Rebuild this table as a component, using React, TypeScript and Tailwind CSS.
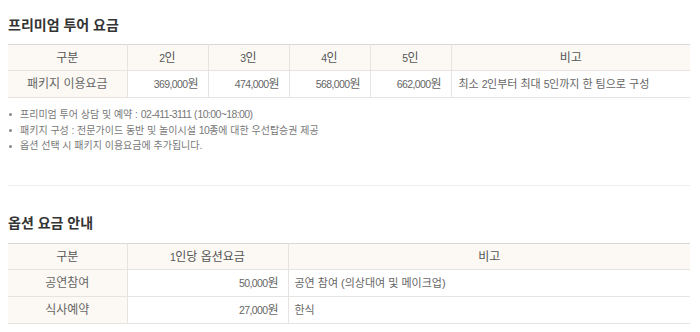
const tourHeads = ["구분", "2인", "3인", "4인", "5인", "비고"];
const tourWidths = ["w-[119px]", "w-[81px]", "w-[81px]", "w-[81px]", "w-[81px]", ""];
const tourPrices = ["369,000원", "474,000원", "568,000원", "662,000원"];

const notes = [
  "프리미엄 투어 상담 및 예약 : 02-411-3111 (10:00~18:00)",
  "패키지 구성 : 전문가이드 동반 및 놀이시설 10종에 대한 우선탑승권 제공",
  "옵션 선택 시 패키지 이용요금에 추가됩니다.",
];

const options = [
  { name: "공연참여", price: "50,000원", note: "공연 참여 (의상대여 및 메이크업)" },
  { name: "식사예약", price: "27,000원", note: "한식" },
];

const th = "h-[26px] border-b border-l border-[#e6e3e1] bg-[#fcf9f4] text-center font-normal text-[#555] first:border-l-0";
const td = "h-[27px] border-b border-l border-[#e6e3e1] first:border-l-0";

// digits in the source are set much narrower than the hangul around them
function Txt({ text }: { text: string }) {
  const parts = text.split(/([0-9][0-9,:~\-()]*)/);
  return (
    <>
      {parts.map((p, i) =>
        i % 2 === 1 ? (
          <span key={i} className="text-[10.5px] tracking-[-0.6px]">
            {p}
          </span>
        ) : (
          <span key={i}>{p}</span>
        )
      )}
    </>
  );
}

export default function App() {
  return (
    <div
      className="w-[700px] bg-white pl-2 pr-[10px] pt-[17px] text-[12px] text-[#666]"
      style={{ fontFamily: '"Liberation Sans", "Noto Sans CJK KR", sans-serif' }}
    >
      <h3 className="text-[14px] leading-[16px] font-bold text-[#333]">프리미엄 투어 요금</h3>
      <table className="mt-[11px] w-[682px] table-fixed border-collapse border-t border-[#dcd8d8]">
        <thead>
          <tr>
            {tourHeads.map((h, i) => (
              <th key={h} className={`${th} ${tourWidths[i]}`}>
                <Txt text={h} />
              </th>
            ))}
          </tr>
        </thead>
        <tbody>
          <tr>
            <td className={`${td} bg-[#fcf9f4] text-center`}>패키지 이용요금</td>
            {tourPrices.map((p) => (
              <td key={p} className={`${td} pr-[9px] text-right`}>
                <Txt text={p} />
              </td>
            ))}
            <td className={`${td} pl-[7px] text-[11px]`}>
              <Txt text="최소 2인부터 최대 5인까지 한 팀으로 구성" />
            </td>
          </tr>
        </tbody>
      </table>

      <ul className="mt-2 text-[10px] leading-[16px] text-[#777]">
        {notes.map((n) => (
          <li key={n} className="flex h-[16px] items-center overflow-hidden">
            <span className="ml-[1px] mr-[8px] h-[3px] w-[3px] shrink-0 rounded-full bg-[#888]" />
            <span className="leading-[16px]">
              <Txt text={n} />
            </span>
          </li>
        ))}
      </ul>

      <div className="mt-[31px] border-t border-[#eeeeee]" />

      <h3 className="mt-[29px] text-[14px] leading-[16px] font-bold text-[#333]">옵션 요금 안내</h3>
      <table className="mt-[12px] w-[682px] table-fixed border-collapse border-t border-[#dcd8d8]">
        <thead>
          <tr>
            <th className={`${th} w-[119px]`}>구분</th>
            <th className={`${th} w-[161px]`}>
              <Txt text="1인당 옵션요금" />
            </th>
            <th className={th}>비고</th>
          </tr>
        </thead>
        <tbody>
          {options.map((o) => (
            <tr key={o.name}>
              <td className={`${td} bg-[#fcf9f4] text-center`}>{o.name}</td>
              <td className={`${td} pr-[9px] text-right`}>
                <Txt text={o.price} />
              </td>
              <td className={`${td} pl-[6px] text-[11px]`}>{o.note}</td>
            </tr>
          ))}
        </tbody>
      </table>
    </div>
  );
}
